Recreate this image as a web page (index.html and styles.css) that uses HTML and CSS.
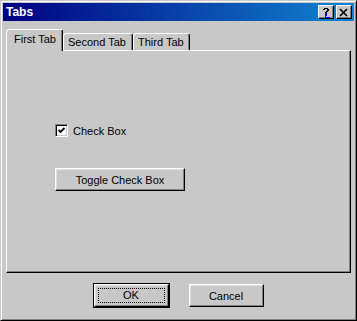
FILE: index.html
```html
<!DOCTYPE html>
<html lang="en">
<head>
    <meta charset="UTF-8">
    <title>Tabs</title>
    <link rel="stylesheet" href="styles.css">
</head>
<body>
    <div class="window">
        <div class="titlebar">
            <span class="title">Tabs</span>
            <div class="caption-buttons">
                <button class="cap-btn">
                    <svg width="12" height="11" viewBox="0 0 12 11">
                        <path d="M3 3 V2 H4 V1 H8 V2 H9 V4 H8 V5 H7 V6 H5 V5 H6 V4 H7 V2 H5 V3 Z" fill="#000"/>
                        <rect x="5" y="6" width="2" height="1" fill="#000"/>
                        <path d="M5 7 H6 V10 H10 V11 H5 Z" fill="#0000ff"/>
                        <path d="M6 7 H7 V9 H6 Z" fill="#0000ff"/>
                    </svg>
                </button>
                <button class="cap-btn">
                    <svg width="10" height="9" viewBox="0 0 10 9">
                        <path d="M1 1 L8 8 M8 1 L1 8" stroke="#000" stroke-width="1.6" fill="none"/>
                    </svg>
                </button>
            </div>
        </div>

        <div class="dialog">
            <div class="tabs">
                <div class="tab active">First Tab</div>
                <div class="tab">Second Tab</div>
                <div class="tab">Third Tab</div>
            </div>

            <div class="panel">
                <label class="check">
                    <span class="box">
                        <svg width="9" height="9" viewBox="0 0 9 9">
                            <path d="M1.5 4 L3.5 6 L7.5 2" stroke="#000" stroke-width="1.8" fill="none"/>
                        </svg>
                    </span>
                    Check Box
                </label>
                <button class="btn toggle">Toggle Check Box</button>
            </div>

            <div class="actions">
                <button class="btn default"><span class="focus">OK</span></button>
                <button class="btn">Cancel</button>
            </div>
        </div>
    </div>
</body>
</html>
```

FILE: styles.css
```css
body {
    margin: 0;
    background: #c8c8c8;
    font-family: "Liberation Sans", Arial, sans-serif;
    font-size: 11px;
    color: #000;
}

.window {
    width: 357px;
    height: 321px;
    box-sizing: border-box;
    background: #c8c8c8;
    border: 1px solid;
    border-color: #c8c8c8 #000 #000 #c8c8c8;
    box-shadow: inset 1px 1px #fff, inset -1px -1px #808080;
    padding: 2px;
}

.titlebar {
    height: 18px;
    display: flex;
    align-items: center;
    justify-content: space-between;
    padding: 0 2px 0 3px;
    background: linear-gradient(to right, #000080, #1084d0);
}

.title {
    color: #fff;
    font-weight: bold;
    font-size: 12px;
}

.caption-buttons {
    display: flex;
    gap: 2px;
}

.cap-btn {
    width: 16px;
    height: 14px;
    padding: 0;
    display: flex;
    align-items: center;
    justify-content: center;
    background: #c8c8c8;
    border: 1px solid;
    border-color: #fff #000 #000 #fff;
    box-shadow: inset -1px -1px #808080;
}

.dialog {
    padding: 0 3px;
}

.tabs {
    display: flex;
    align-items: flex-end;
    height: 21px;
    margin-top: 8px;
    position: relative;
    z-index: 1;
}

.tab {
    height: 17px;
    box-sizing: border-box;
    padding: 2px 0 0 4px;
    white-space: nowrap;
    border-top: 1px solid #fff;
    border-left: 1px solid #fff;
    border-right: 1px solid #000;
    border-radius: 3px 3px 0 0;
    box-shadow: inset -1px 0 #808080;
    background: #c8c8c8;
    line-height: 13px;
}

.tab:nth-child(2) {
    width: 70px;
}

.tab:nth-child(3) {
    width: 57px;
}

.tab.active {
    width: 57px;
    height: 22px;
    margin-bottom: -1px;
    padding-top: 3px;
    padding-left: 7px;
}

.panel {
    height: 223px;
    box-sizing: border-box;
    border: 1px solid;
    border-color: #fff #000 #000 #fff;
    box-shadow: inset -1px -1px #808080;
    padding: 73px 0 0 48px;
    display: flex;
    flex-direction: column;
    align-items: flex-start;
}

.check {
    display: flex;
    align-items: center;
    gap: 5px;
    height: 13px;
}

.box {
    width: 13px;
    height: 13px;
    box-sizing: border-box;
    background: #fff;
    border: 1px solid;
    border-color: #808080 #fff #fff #808080;
    box-shadow: inset 1px 1px #000, inset -1px -1px #c8c8c8;
    display: flex;
    align-items: center;
    justify-content: center;
}

.btn {
    font-family: inherit;
    font-size: 11px;
    height: 23px;
    padding: 0;
    background: #c8c8c8;
    border: 1px solid;
    border-color: #fff #000 #000 #fff;
    box-shadow: inset -1px -1px #808080, inset 1px 1px #dfdfdf;
    color: #000;
}

.toggle {
    width: 130px;
    margin-top: 31px;
}

.actions {
    display: flex;
    justify-content: center;
    gap: 20px;
    margin-top: 11px;
}

.actions .btn {
    width: 75px;
}

.btn.default {
    outline: 1px solid #000;
    display: flex;
    align-items: center;
    justify-content: center;
    padding: 3px;
}

.focus {
    display: block;
    width: 100%;
    height: 100%;
    box-sizing: border-box;
    border: 1px dotted #000;
    line-height: 13px;
}
```
